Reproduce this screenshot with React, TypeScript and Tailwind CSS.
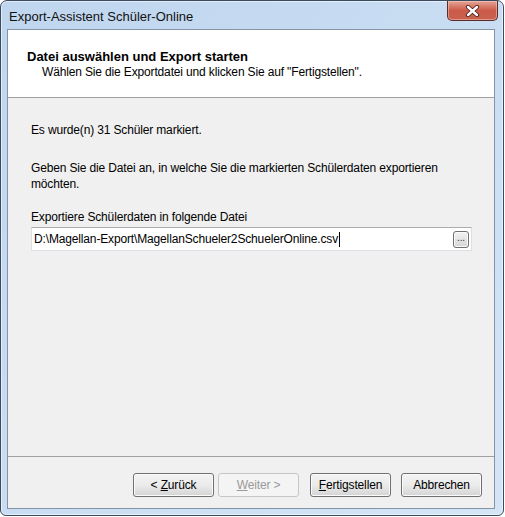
import React from 'react';

const font = "font-['Liberation_Sans','Arial',sans-serif]";

type BtnProps = {
  label: React.ReactNode;
  disabled?: boolean;
};

const WinButton = ({ label, disabled }: BtnProps) => {
  if (disabled) {
    return (
      <div className="w-[81px] h-[24px] rounded-[3px] border border-[#c3c7ca] bg-[#f4f4f4] flex items-center justify-center text-[12px] tracking-[-0.15px] text-[#9a9a9a]">
        {label}
      </div>
    );
  }
  return (
    <div className="w-[81px] h-[24px] rounded-[3px] border border-[#707070] bg-gradient-to-b from-[#f3f3f3] via-[#ebebeb] to-[#d4d4d4] shadow-[inset_0_0_0_1px_#fbfbfb] flex items-center justify-center text-[12px] tracking-[-0.15px] text-black">
      {label}
    </div>
  );
};

const CloseButton = () => (
  <div className="w-[51px] h-[20px] rounded-b-[5px] border border-t-0 border-[#5b2b2a] bg-gradient-to-b from-[#e3a597] via-[#cc5a48] to-[#c9614f] shadow-[inset_0_0_0_1px_rgba(255,220,210,0.45)] flex items-center justify-center">
    <svg width="15" height="12" viewBox="0 0 15 12">
      <path d="M3 2 L12 10 M12 2 L3 10" stroke="#4a2420" strokeWidth="4.2" strokeLinecap="round" />
      <path d="M3 2 L12 10 M12 2 L3 10" stroke="#ffffff" strokeWidth="2.4" strokeLinecap="round" />
    </svg>
  </div>
);

export default function App() {
  return (
    <div className={`w-[505px] h-[517px] bg-white ${font}`}>
      <div className="w-[504px] h-[516px] rounded-t-[7px] rounded-b-[6px] border border-[#3a4b60] bg-gradient-to-br from-[#bfd6ef] via-[#c9ddf2] to-[#d4e5f6] shadow-[inset_0_0_0_1px_rgba(255,255,255,0.55)] flex flex-col">
        {/* Titelleiste */}
        <div className="h-[28px] flex items-start justify-between pl-[8px] pr-[5px]">
          <span className="pt-[8px] leading-[16px] text-[13px] text-[#111]">Export-Assistent Schüler-Online</span>
          <CloseButton />
        </div>

        {/* Client-Bereich */}
        <div className="flex-1 ml-[6px] mr-[8px] mb-[6px] border border-[#8493a5] bg-[#f0f0f0] flex flex-col">
          <div className="h-[68px] bg-white border-b border-[#a0a0a0] pl-[19px] pt-[19px]">
            <div className="text-[13px] leading-[16px] font-bold text-black">Datei auswählen und Export starten</div>
            <div className="pl-[15px] text-[12px] leading-[15px] tracking-[-0.15px] text-black">
              Wählen Sie die Exportdatei und klicken Sie auf "Fertigstellen".
            </div>
          </div>

          <div className="flex-1 pl-[23px] pt-[25px] text-[12px] tracking-[-0.15px] text-black">
            <div className="leading-[15px]">Es wurde(n) 31 Schüler markiert.</div>
            <div className="mt-[22px] leading-[16px] w-[420px]">
              Geben Sie die Datei an, in welche Sie die markierten Schülerdaten exportieren möchten.
            </div>
            <div className="mt-[17px] leading-[16px]">Exportiere Schülerdaten in folgende Datei</div>
            <div className="mt-[2px] w-[441px] h-[24px] bg-white border border-[#dbdfe6] border-t-[#abadb3] flex items-center justify-between pl-[2px] pr-[2px]">
              <span className="flex items-center">
                D:\Magellan-Export\MagellanSchueler2SchuelerOnline.csv
                <span className="inline-block w-[1px] h-[15px] bg-black ml-[1px]" />
              </span>
              <div className="w-[16px] h-[17px] rounded-[3px] border border-[#707070] bg-gradient-to-b from-[#f3f3f3] to-[#d6d6d6] shadow-[inset_0_0_0_1px_#fbfbfb] flex items-center justify-center text-[10px] leading-[10px] pb-[3px] text-[#333]">
                ...
              </div>
            </div>
          </div>

          <div className="border-t border-[#a0a0a0] h-[52px] flex items-start justify-end pt-[16px] pr-[12px]">
            <div className="flex gap-[4px]">
              <WinButton label={<span>&lt; <u>Z</u>urück</span>} />
              <WinButton disabled label={<span><u>W</u>eiter &gt;</span>} />
            </div>
            <div className="ml-[11px] flex gap-[10px]">
              <WinButton label={<span><u>F</u>ertigstellen</span>} />
              <WinButton label="Abbrechen" />
            </div>
          </div>
        </div>
      </div>
    </div>
  );
}
